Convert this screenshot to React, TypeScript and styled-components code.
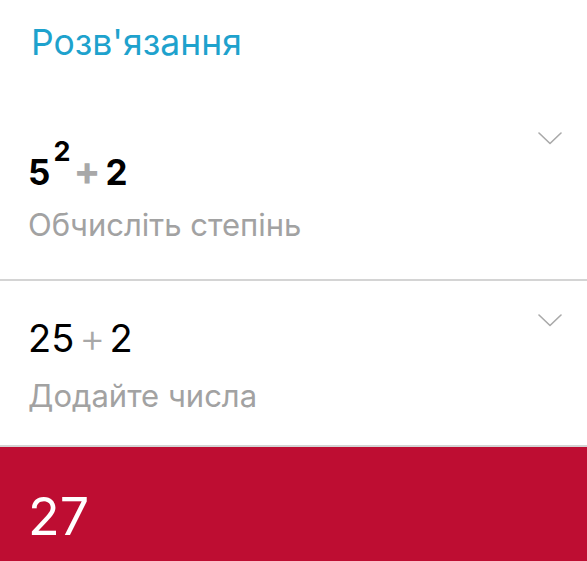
import React from "react";
import styled, { createGlobalStyle } from "styled-components";

const Global = createGlobalStyle`
  html, body { margin: 0; padding: 0; background: #ffffff; }
  body { font-family: Inter, "Noto Sans", "Liberation Sans", sans-serif; }
`;

const Page = styled.div`
  width: 587px;
  height: 561px;
  display: flex;
  flex-direction: column;
  overflow: hidden;
  background: #ffffff;
`;

const Header = styled.div`
  height: 100px;
  box-sizing: border-box;
  padding: 25px 0 0 31px;
`;

const Title = styled.h1`
  margin: 0;
  font-size: 35.5px;
  line-height: 1;
  font-weight: 400;
  color: #1ea2cd;
`;

const Step = styled.div<{ $height: number; $top: number }>`
  position: relative;
  height: ${(p) => p.$height}px;
  box-sizing: border-box;
  padding: ${(p) => p.$top}px 0 0 28px;
  border-bottom: 2px solid #d4d4d4;
  display: flex;
  flex-direction: column;
`;

const Expr = styled.div<{ $bold?: boolean }>`
  display: flex;
  align-items: baseline;
  height: ${(p) => (p.$bold ? 35 : 38)}px;
  font-size: ${(p) => (p.$bold ? 35 : 38)}px;
  line-height: 1;
  font-weight: ${(p) => (p.$bold ? 700 : 400)};
  color: #000000;
`;

const Sup = styled.span`
  font-size: 27px;
  position: relative;
  top: -24px;
  margin-left: 3px;
`;

const Plus = styled.span<{ $bold?: boolean }>`
  color: #a8a8a8;
  font-size: 40px;
  margin: 0 ${(p) => (p.$bold ? 5 : 4)}px 0 ${(p) => (p.$bold ? 3 : 5)}px;
  font-weight: ${(p) => (p.$bold ? 700 : 300)};
`;

const Hint = styled.div<{ $gap: number }>`
  margin-top: ${(p) => p.$gap}px;
  font-size: 31px;
  line-height: 1;
  color: #a2a2a2;
  font-weight: 400;
`;

const Chevron = styled.svg`
  position: absolute;
  right: 25px;
  width: 24px;
  height: 13px;
`;

const Result = styled.div`
  flex: 1;
  background: #be0d32;
  padding: 44px 0 0 28px;
  box-sizing: border-box;
`;

const ResultValue = styled.div`
  font-size: 52px;
  line-height: 1;
  color: #ffffff;
  font-weight: 400;
`;

const Caret = ({ top }: { top: number }) => (
  <Chevron viewBox="0 0 24 13" style={{ top }}>
    <polyline
      points="1,1 12,11.5 23,1"
      fill="none"
      stroke="#a9a9a9"
      strokeWidth="1.6"
      strokeLinecap="round"
      strokeLinejoin="round"
    />
  </Chevron>
);

export default function App() {
  return (
    <Page>
      <Global />
      <Header>
        <Title>Розв'язання</Title>
      </Header>
      <Step $height={181} $top={51}>
        <Caret top={32} />
        <Expr $bold>
          <span>5</span>
          <Sup>2</Sup>
          <Plus $bold>+</Plus>
          <span>2</span>
        </Expr>
        <Hint $gap={23}>Обчисліть степінь</Hint>
      </Step>
      <Step $height={166} $top={37}>
        <Caret top={33} />
        <Expr>
          <span>25</span>
          <Plus>+</Plus>
          <span>2</span>
        </Expr>
        <Hint $gap={24}>Додайте числа</Hint>
      </Step>
      <Result>
        <ResultValue>27</ResultValue>
      </Result>
    </Page>
  );
}
